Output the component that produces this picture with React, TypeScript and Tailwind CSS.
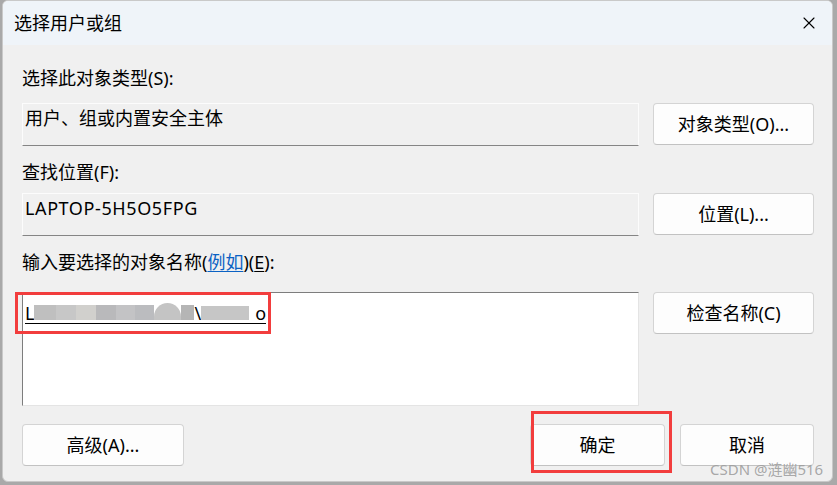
import { X } from "lucide-react";

const font = { fontFamily: '"Noto Sans", "Noto Sans CJK SC", sans-serif' };

function Btn({ label, className = "" }: { label: string; className?: string }) {
  return (
    <button
      className={
        "flex h-[42px] items-center justify-center rounded-[4px] border border-[#d4d4d4] border-b-[#c2c2c2] bg-[#fdfdfd] text-[18px] text-black " +
        className
      }
    >
      {label}
    </button>
  );
}

function Field({ text, className = "" }: { text: string; className?: string }) {
  return (
    <div
      className={
        "h-[43px] w-[617px] border border-[#fcfcfc] border-b-[#858585] bg-[#f0f0f0] pl-[2px] pt-[2px] text-[18px] leading-6 text-black " +
        className
      }
    >
      {text}
    </div>
  );
}

export default function App() {
  return (
    <div className="relative h-[485px] w-[837px] bg-[#a9a9a9] pb-[3px] pl-[2px] pr-[4px]" style={font}>
      <div className="flex h-full flex-col overflow-hidden rounded-t-[6px] rounded-b-[6px] border border-[#c9c9c9] bg-[#f0f0f0]">
        {/* title bar */}
        <div className="flex h-[44px] shrink-0 items-center justify-between bg-[#eff4f9] pl-[11px] pr-[13px]">
          <span className="text-[18px] leading-6 text-black">选择用户或组</span>
          <X size={20} strokeWidth={1.3} className="text-black" />
        </div>

        {/* body */}
        <div className="flex flex-col pl-[19px] pr-[18px] pt-[21px]">
          <div className="h-6 text-[18px] leading-6 text-black">选择此对象类型(S):</div>
          <div className="mt-[13px] flex gap-[14px]">
            <Field text="用户、组或内置安全主体" />
            <Btn label="对象类型(O)..." className="w-[161px]" />
          </div>

          <div className="mt-[14px] h-6 text-[18px] leading-6 text-black">查找位置(F):</div>
          <div className="mt-[9px] flex gap-[14px]">
            <Field text="LAPTOP-5H5O5FPG" className="tracking-[0.6px]" />
            <Btn label="位置(L)..." className="w-[161px]" />
          </div>

          <div className="mt-[14px] h-6 text-[18px] leading-6 text-black">
            输入要选择的对象名称(<span className="text-[#0b62c4] underline underline-offset-2">例如</span>)(<span className="underline underline-offset-2">E</span>):
          </div>
          <div className="mt-[18px] flex gap-[14px]">
            <div className="h-[114px] w-[617px] border border-[#e4e4e4] border-l-[#7d7d7d] border-t-[#7d7d7d] bg-white pl-[2px] pt-[9px]">
              <div className="inline-flex h-[22px] items-end border-b border-black text-[18px] leading-5 text-black">
                <span className="leading-5">L</span>
                <span className="mb-[3px] h-[15px] w-[22px] bg-[#bfbfbf]" />
                <span className="mb-[3px] h-[15px] w-[20px] bg-[#c7c7c7]" />
                <span className="mb-[3px] h-[15px] w-[20px] bg-[#d1d0cd]" />
                <span className="mb-[3px] h-[15px] w-[20px] bg-[#b9b9bb]" />
                <span className="mb-[3px] h-[15px] w-[19px] bg-[#c3c3c5]" />
                <span className="mb-[3px] h-[15px] w-[19px] bg-[#bbbcbf]" />
                <span className="mb-[3px] h-[17px] w-[27px] rounded-t-full bg-[#c4c4c4]" />
                <span className="mb-[3px] h-[15px] w-[13px] bg-[#b5b5b5]" />
                <span className="leading-5">\</span>
                <span className="mb-[3px] h-[14px] w-[48px] bg-[#c6c6c6]" />
                <span className="ml-[6px] leading-5">o</span>
              </div>
            </div>
            <Btn label="检查名称(C)" className="w-[161px]" />
          </div>

          <div className="mt-[18px] flex">
            <Btn label="高级(A)..." className="w-[162px]" />
            <Btn label="确定" className="ml-auto w-[135px]" />
            <Btn label="取消" className="ml-[15px] w-[134px]" />
          </div>
        </div>
      </div>

      {/* annotation boxes */}
      <div className="pointer-events-none absolute left-[15px] top-[292px] h-[42px] w-[256px] border-[3px] border-[#f23d3d]" />
      <div className="pointer-events-none absolute left-[531px] top-[411px] h-[62px] w-[141px] border-[3px] border-[#f23d3d]" />

      {/* watermark */}
      <div className="pointer-events-none absolute left-[710px] top-[459px] text-[15px] leading-5 text-[#9e9e9e]/90">
        CSDN @涟幽516
      </div>
    </div>
  );
}
